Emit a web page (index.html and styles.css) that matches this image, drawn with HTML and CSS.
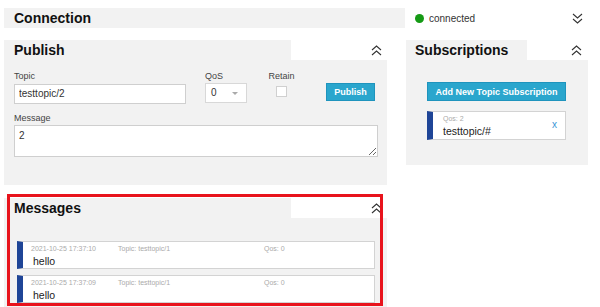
FILE: index.html
```html
<!DOCTYPE html>
<html lang="en">

<head>
    <meta charset="UTF-8">
    <meta name="viewport" content="width=device-width, initial-scale=1.0">
    <title>MQTT Client</title>
    <link rel="stylesheet" href="styles.css">
</head>

<body>
    <div class="page">
        <div class="top-row">
            <div class="conn-bar">
                <h2>Connection</h2>
            </div>
            <div class="status"><span class="dot"></span>connected</div>
            <svg class="chev chev-top" viewBox="0 0 11 11" width="11" height="11">
                <polyline points="1,1 5.5,5 10,1" />
                <polyline points="1,6 5.5,10 10,6" />
            </svg>
        </div>

        <div class="main">
            <div class="col-left">
                <section class="panel publish">
                    <div class="panel-head">
                        <h2>Publish</h2>
                        <div class="toggle">
                            <svg class="chev" viewBox="0 0 11 11" width="11" height="11">
                                <polyline points="1,5 5.5,1 10,5" />
                                <polyline points="1,10 5.5,6 10,10" />
                            </svg>
                        </div>
                    </div>
                    <div class="panel-body">
                        <div class="form-row">
                            <div class="field topic-field">
                                <label for="topic">Topic</label>
                                <input type="text" id="topic" value="testtopic/2">
                            </div>
                            <div class="field qos-field">
                                <label>QoS</label>
                                <div class="select">0</div>
                            </div>
                            <div class="field retain-field">
                                <label for="retain">Retain</label>
                                <input type="checkbox" id="retain">
                            </div>
                            <button class="btn publish-btn">Publish</button>
                        </div>
                        <div class="field msg-field">
                            <label for="message">Message</label>
                            <textarea id="message">2</textarea>
                        </div>
                    </div>
                </section>

                <section class="panel messages">
                    <div class="panel-head">
                        <h2>Messages</h2>
                        <div class="toggle">
                            <svg class="chev" viewBox="0 0 11 11" width="11" height="11">
                                <polyline points="1,5 5.5,1 10,5" />
                                <polyline points="1,10 5.5,6 10,10" />
                            </svg>
                        </div>
                    </div>
                    <div class="panel-body">
                        <div class="msg-item">
                            <div class="meta">
                                <span class="date">2021-10-25 17:37:10</span>
                                <span class="topic">Topic: testtopic/1</span>
                                <span>Qos: 0</span>
                            </div>
                            <div class="payload">hello</div>
                        </div>
                        <div class="msg-item">
                            <div class="meta">
                                <span class="date">2021-10-25 17:37:09</span>
                                <span class="topic">Topic: testtopic/1</span>
                                <span>Qos: 0</span>
                            </div>
                            <div class="payload">hello</div>
                        </div>
                    </div>
                </section>
            </div>

            <div class="col-right">
                <section class="panel subs">
                    <div class="panel-head">
                        <h2>Subscriptions</h2>
                        <div class="toggle">
                            <svg class="chev" viewBox="0 0 11 11" width="11" height="11">
                                <polyline points="1,5 5.5,1 10,5" />
                                <polyline points="1,10 5.5,6 10,10" />
                            </svg>
                        </div>
                    </div>
                    <div class="panel-body">
                        <button class="btn add-btn">Add New Topic Subscription</button>
                        <div class="sub-item">
                            <div class="sub-text">
                                <div class="sub-qos">Qos: 2</div>
                                <div class="sub-topic">testtopic/#</div>
                            </div>
                            <span class="sub-close">x</span>
                        </div>
                    </div>
                </section>
            </div>
        </div>
    </div>
</body>

</html>
```

FILE: styles.css
```css
body {
    margin: 0;
    font-family: "Liberation Sans", Arial, sans-serif;
    background: white;
    color: #222;
    overflow: hidden;
}

.page {
    padding: 8px 0 0 4px;
}

h2 {
    margin: 0;
    font-size: 14px;
    font-weight: bold;
    color: #111;
}

.chev {
    display: block;
    fill: none;
    stroke: #333;
    stroke-width: 1.1;
}

/* top row */
.top-row {
    display: flex;
    align-items: center;
    height: 20px;
}

.conn-bar {
    width: 401px;
    height: 20px;
    padding-left: 10px;
    box-sizing: border-box;
    background: #f2f2f2;
    line-height: 21px;
}

.status {
    display: flex;
    align-items: center;
    gap: 5px;
    margin-left: 10px;
    font-size: 10px;
    color: #333;
}

.dot {
    width: 9px;
    height: 9px;
    border-radius: 50%;
    background: #159a15;
}

.chev-top {
    margin-left: auto;
    margin-right: 17px;
}

/* columns */
.main {
    display: flex;
    align-items: flex-start;
    gap: 19px;
    margin-top: 12px;
}

.col-left {
    width: 383px;
}

.col-right {
    width: 182px;
}

/* panels */
.panel-head {
    display: flex;
    height: 20px;
}

.panel-head h2 {
    flex: 0 0 287px;
    padding-left: 10px;
    box-sizing: border-box;
    background: #f2f2f2;
    line-height: 21px;
}

.toggle {
    flex: 1;
    display: flex;
    justify-content: flex-end;
    align-items: center;
    padding-right: 5px;
}

.panel-body {
    background: #f2f2f2;
}

/* publish */
.publish .panel-body {
    height: 125px;
    padding: 11px 10px 0;
    box-sizing: border-box;
}

.form-row {
    display: flex;
    align-items: flex-start;
}

.field label {
    display: block;
    height: 10px;
    margin-bottom: 2px;
    font-size: 9px;
    line-height: 10px;
    color: #444;
}

.topic-field input {
    width: 172px;
    height: 20px;
    padding: 0 4px;
    box-sizing: border-box;
    border: 1px solid #cfcfcf;
    font-family: inherit;
    font-size: 10px;
    color: #333;
    outline: none;
}

.qos-field {
    margin-left: 19px;
}

.select {
    position: relative;
    width: 42px;
    height: 20px;
    padding-left: 5px;
    box-sizing: border-box;
    border: 1px solid #d8d8d8;
    background: white;
    font-size: 10px;
    line-height: 18px;
    color: #333;
}

.select::after {
    content: "";
    position: absolute;
    right: 8px;
    top: 8px;
    border-left: 3px solid transparent;
    border-right: 3px solid transparent;
    border-top: 3px solid #aaa;
}

.retain-field {
    width: 27px;
    margin-left: 21px;
    text-align: center;
}

.retain-field input {
    appearance: none;
    display: block;
    width: 11px;
    height: 11px;
    margin: 5px auto 0;
    border: 1px solid #d0d0d0;
    background: white;
}

.btn {
    border: 1px solid #1f94bd;
    background: #2aa6cd;
    color: white;
    font-family: inherit;
    font-weight: bold;
    font-size: 9px;
    cursor: pointer;
}

.publish-btn {
    width: 49px;
    height: 18px;
    margin-top: 12px;
    margin-left: auto;
    margin-right: 2px;
    padding: 0;
}

.msg-field {
    margin-top: 9px;
}

.msg-field textarea {
    display: block;
    width: 364px;
    height: 32px;
    padding: 4px;
    box-sizing: border-box;
    border: 1px solid #cfcfcf;
    font-family: inherit;
    font-size: 10px;
    color: #333;
}

/* messages */
.messages {
    position: relative;
    margin-top: 13px;
}

.messages .panel-body {
    padding: 23px 12px 10px 13px;
}

.messages::after {
    content: "";
    position: absolute;
    left: 3px;
    top: -4px;
    width: 376px;
    height: 112px;
    border: 3px solid #e8131c;
    box-sizing: border-box;
}

.msg-item {
    height: 28px;
    margin-bottom: 6px;
    padding: 3px 0 0 8px;
    box-sizing: border-box;
    border: 1px solid #d3d3d3;
    border-left: 6px solid #1f4597;
    background: white;
}

.meta {
    display: flex;
    font-size: 7px;
    color: #aaa;
}

.meta .date {
    width: 87px;
}

.meta .topic {
    width: 146px;
}

.payload {
    margin: 3px 0 0 2px;
    font-size: 10.5px;
    color: #222;
}

/* subscriptions */
.subs .panel-head h2 {
    flex-basis: 121px;
    padding-left: 9px;
}

.subs .toggle {
    padding-right: 6px;
}

.subs .panel-body {
    height: 105px;
    padding: 22px 0 0 21px;
    box-sizing: border-box;
}

.add-btn {
    display: block;
    width: 139px;
    height: 19px;
    padding: 0;
}

.sub-item {
    display: flex;
    width: 139px;
    height: 29px;
    margin-top: 10px;
    padding: 3px 8px 0 10px;
    box-sizing: border-box;
    border: 1px solid #d3d3d3;
    border-left: 6px solid #1f4597;
    background: white;
}

.sub-text {
    flex: 1;
}

.sub-qos {
    font-size: 7px;
    color: #aaa;
}

.sub-topic {
    margin-top: 3px;
    font-size: 10.5px;
    color: #222;
}

.sub-close {
    margin-top: 4px;
    font-size: 10px;
    color: #3a95d6;
}
```
